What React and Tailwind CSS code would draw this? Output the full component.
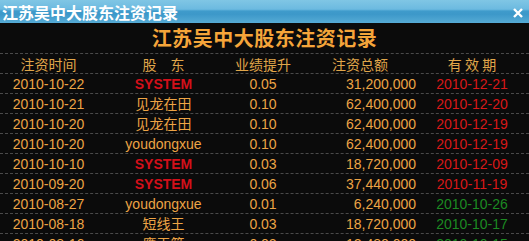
const rows = [
  { date: "2010-10-22", who: "SYSTEM", sys: true, up: "0.05", amt: "31,200,000", until: "2010-12-21", exp: false },
  { date: "2010-10-21", who: "见龙在田", up: "0.10", amt: "62,400,000", until: "2010-12-20", exp: false },
  { date: "2010-10-20", who: "见龙在田", up: "0.10", amt: "62,400,000", until: "2010-12-19", exp: false },
  { date: "2010-10-20", who: "youdongxue", up: "0.10", amt: "62,400,000", until: "2010-12-19", exp: false },
  { date: "2010-10-10", who: "SYSTEM", sys: true, up: "0.03", amt: "18,720,000", until: "2010-12-09", exp: false },
  { date: "2010-09-20", who: "SYSTEM", sys: true, up: "0.06", amt: "37,440,000", until: "2010-11-19", exp: false },
  { date: "2010-08-27", who: "youdongxue", up: "0.01", amt: "6,240,000", until: "2010-10-26", exp: true },
  { date: "2010-08-18", who: "短线王", up: "0.03", amt: "18,720,000", until: "2010-10-17", exp: true },
  { date: "2010-08-16", who: "鹰王箭", up: "0.02", amt: "12,480,000", until: "2010-10-15", exp: true },
];

const grid = "grid grid-cols-[97px_133px_66px_128px_96px] h-5 items-center border-b border-dashed border-[#4a4a4a]";

function App() {
  return (
    <div className="w-[529px] h-[241px] overflow-hidden bg-[#0b0b0b] font-['Liberation_Sans','Noto_Sans_CJK_SC',sans-serif]">
      {/* window title bar */}
      <div className="h-[23px] flex items-center justify-between pl-[2px] pr-[6px] bg-[linear-gradient(to_bottom,#80c6e5_0%,#6cbae0_40%,#3f9bcb_48%,#3d98c9_62%,#56abd5_100%)]">
        <span className="text-white font-bold text-[16px] leading-none font-['Noto_Sans_CJK_SC',sans-serif]">江苏吴中大股东注资记录</span>
        <svg width="10" height="10" viewBox="0 0 10 10" className="mt-[2px]">
          <path d="M1 1L9 9M9 1L1 9" stroke="#fff" strokeWidth="2.4" />
        </svg>
      </div>

      <div className="h-[31px] flex items-center justify-center border-b border-dashed border-[#4a4a4a]">
        <span className="text-[#f5a53a] font-bold text-[20px] tracking-[0.5px] leading-none font-['Noto_Sans_CJK_SC',sans-serif]">江苏吴中大股东注资记录</span>
      </div>

      <div className={grid + " text-[#e0a64a] text-[14px] leading-none font-['Noto_Sans_CJK_SC',sans-serif]"}>
        <div className="text-center">注资时间</div>
        <div className="text-center">股　东</div>
        <div className="text-center">业绩提升</div>
        <div className="text-center">注资总额</div>
        <div className="text-center">有 效 期</div>
      </div>

      {rows.map((r, i) => (
        <div key={i} className={grid + " text-[14px] leading-none text-[#eda445]"}>
          <div className="text-center">{r.date}</div>
          <div className={r.sys ? "text-center font-bold text-[#d3101a]" : "text-center"}>{r.who}</div>
          <div className="text-center">{r.up}</div>
          <div className="text-right pr-2">{r.amt}</div>
          <div className={r.exp ? "text-center text-[#1c8a22]" : "text-center text-[#d81818]"}>{r.until}</div>
        </div>
      ))}
    </div>
  );
}

export default App;
